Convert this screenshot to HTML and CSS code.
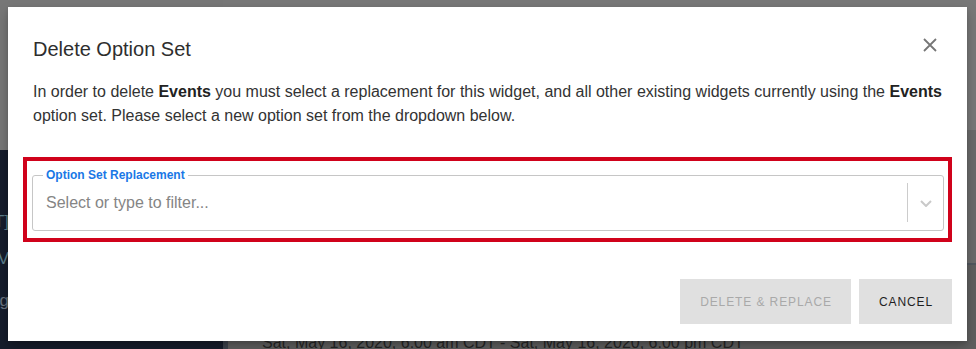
FILE: index.html
```html
<!DOCTYPE html>
<html lang="en">
<head>
<meta charset="utf-8">
<title>Delete Option Set</title>
<link rel="stylesheet" href="styles.css">
</head>
<body>
<div class="page">
  <aside class="side">
    <div class="side-top"></div>
    <nav class="side-nav">
      <div class="nav-item">T]</div>
      <div class="nav-item">V</div>
      <div class="nav-item">ng</div>
    </nav>
  </aside>
  <main class="main">
    <div class="main-top"></div>
    <div class="main-body">
      <div class="row row-first"></div>
      <div class="row row-second">Sat, May 16, 2020, 6:00 am CDT - Sat, May 16, 2020, 6:00 pm CDT</div>
    </div>
  </main>

  <div class="modal" role="dialog" aria-labelledby="dlg-title">
    <header class="modal-header">
      <h2 id="dlg-title" class="modal-title">Delete Option Set</h2>
      <button class="close-btn" aria-label="Close">
        <svg width="14" height="14" viewBox="0 0 14 14"><path d="M1 1 L13 13 M13 1 L1 13" stroke="#767676" stroke-width="1.8" fill="none"/></svg>
      </button>
    </header>
    <p class="modal-text">In order to delete <b>Events</b> you must select a replacement for this widget, and all other existing widgets currently using the <b>Events</b> option set. Please select a new option set from the dropdown below.</p>
    <div class="highlight">
      <div class="field">
        <span class="field-label">Option Set Replacement</span>
        <div class="field-input">Select or type to filter...</div>
        <span class="field-sep"></span>
        <span class="field-arrow">
          <svg width="12" height="7" viewBox="0 0 12 7"><path d="M1 1 L6 6 L11 1" stroke="#c9c9c9" stroke-width="2" fill="none"/></svg>
        </span>
      </div>
    </div>
    <footer class="modal-footer">
      <button class="btn btn-disabled">DELETE &amp; REPLACE</button>
      <button class="btn btn-cancel">CANCEL</button>
    </footer>
  </div>
</div>
</body>
</html>
```

FILE: styles.css
```css
* { box-sizing: border-box; }
html, body { margin: 0; padding: 0; }
body {
  font-family: "Liberation Sans", Arial, sans-serif;
  width: 976px;
  height: 349px;
  overflow: hidden;
}
.page {
  position: relative;
  width: 976px;
  height: 349px;
  overflow: hidden;
  display: grid;
  grid-template-columns: 223px 1fr;
  background: #777777;
}

/* dimmed background page */
.side { display: flex; flex-direction: column; }
.side-top { height: 150px; background: #777777; }
.side-nav {
  flex: 1;
  background: #161d2c;
  padding-top: 63px;
  display: flex;
  flex-direction: column;
  gap: 19px;
}
.nav-item {
  width: 9px;
  height: 18px;
  line-height: 18px;
  font-size: 17px;
  white-space: nowrap;
  display: flex;
  justify-content: flex-end;
  color: #5b7d8a;
}
.nav-item:last-child { margin-top: 5px; color: #68737f; }

.main {
  display: flex;
  flex-direction: column;
}
.main-top { height: 130px; background: #787878; }
.main-body {
  flex: 1;
  display: flex;
  flex-direction: column;
  background: #6b6b6b;
  border-left: 5px solid #3d434d;
}
.row-first { height: 135px; border-bottom: 2px solid #51575e; }
.row-second {
  flex: 1;
  background: #5f5f5f;
  color: #262626;
  font-size: 16px;
  line-height: 20px;
  padding: 68px 0 0 34px;
  white-space: nowrap;
}

/* modal */
.modal {
  position: absolute;
  left: 8px;
  top: 7px;
  width: 959px;
  height: 334px;
  background: #ffffff;
  display: flex;
  flex-direction: column;
  box-shadow: 0 6px 12px rgba(0,0,0,.22), 0 2px 4px rgba(0,0,0,.12);
}
.modal-header {
  display: flex;
  justify-content: space-between;
  align-items: flex-start;
  padding: 30px 30px 0 25px;
}
.modal-title {
  margin: 0;
  font-size: 20px;
  line-height: 24px;
  font-weight: normal;
  color: #2e2e2e;
}
.close-btn {
  margin-top: 1px;
  padding: 0;
  border: 0;
  background: none;
  width: 14px;
  height: 14px;
  display: flex;
}
.modal-text {
  margin: 19px 0 0;
  padding: 0 12px 0 25px;
  font-size: 16px;
  line-height: 24px;
  color: #333333;
}
.modal-text b { color: #222222; }

.highlight {
  margin: 29px 15px 0;
  border: 4px solid #d0021b;
  padding: 14px 4px 7px 5px;
}
.field {
  position: relative;
  height: 56px;
  border: 1px solid #c6c6c6;
  border-radius: 3px;
  display: flex;
  align-items: center;
}
.field-label {
  position: absolute;
  top: -8px;
  left: 10px;
  padding: 0 3px;
  background: #ffffff;
  font-size: 12px;
  line-height: 14px;
  font-weight: bold;
  color: #1a78e6;
}
.field-input {
  flex: 1;
  padding-left: 13px;
  font-size: 16px;
  line-height: 20px;
  color: #858585;
}
.field-sep {
  align-self: stretch;
  width: 1px;
  margin: 7px 0 8px;
  background: #cccccc;
}
.field-arrow {
  width: 35px;
  display: flex;
  justify-content: center;
  align-items: center;
}

.modal-footer {
  margin-top: auto;
  display: flex;
  justify-content: flex-end;
  gap: 8px;
  padding: 0 15px 17px 0;
}
.btn {
  height: 45px;
  padding: 0 19px 0 20px;
  border: 0;
  border-radius: 0;
  background: #e0e0e0;
  font-family: "Liberation Sans", Arial, sans-serif;
  font-size: 12px;
  letter-spacing: 0.9px;
}
.btn-disabled { color: #a9a9a9; }
.btn-cancel { color: #1f1f1f; }
```
